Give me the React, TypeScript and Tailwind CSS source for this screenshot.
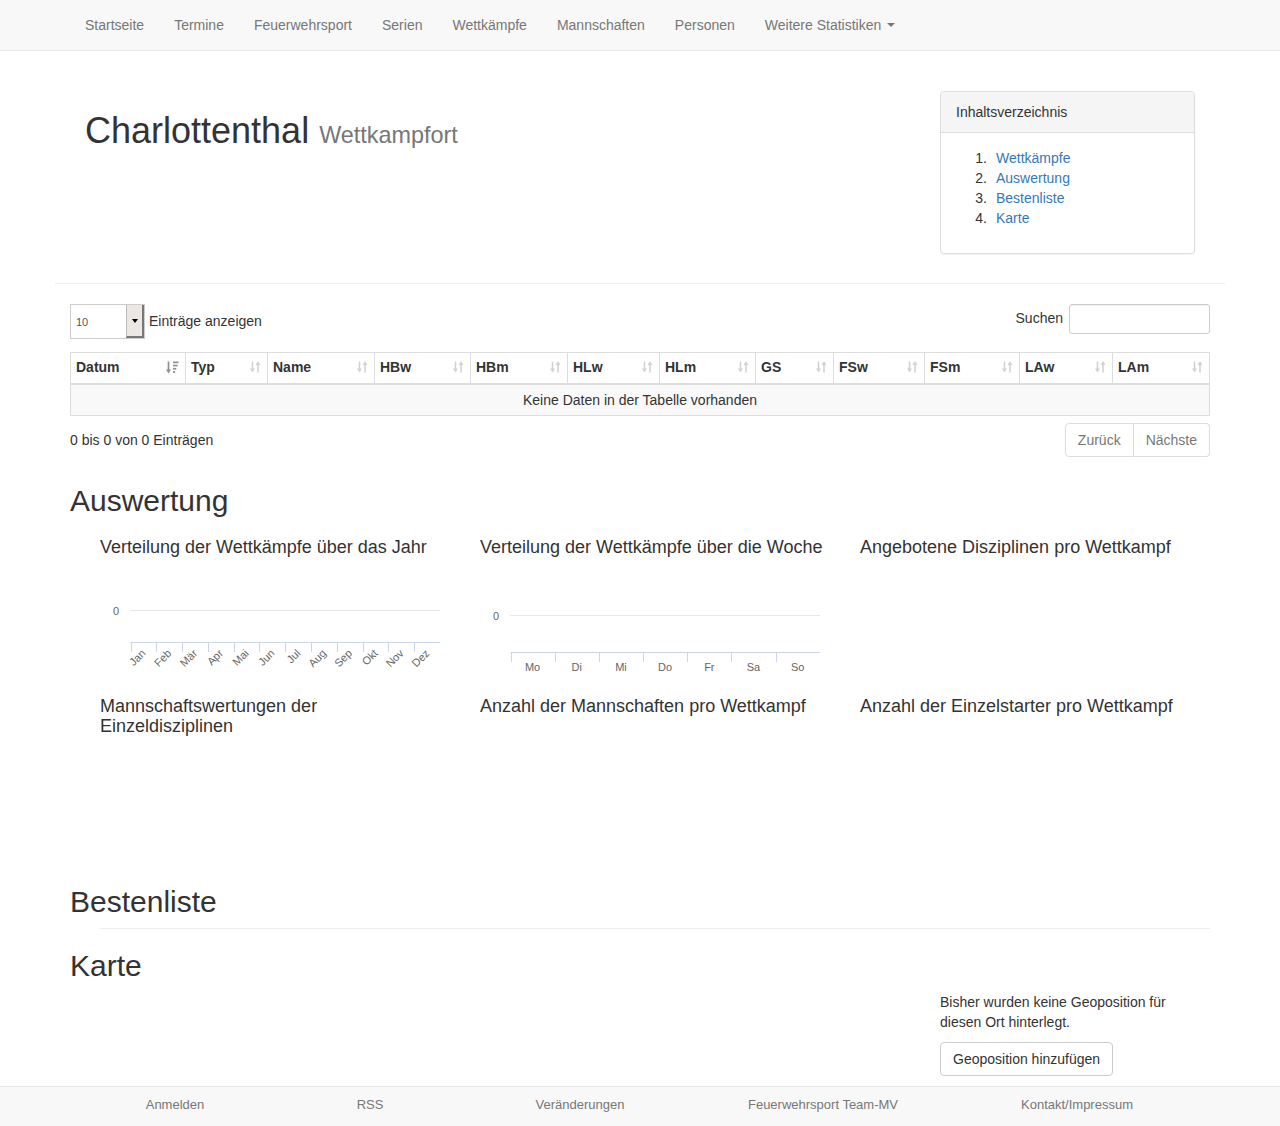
import React from "react";

const navItems = ["Startseite", "Termine", "Feuerwehrsport", "Serien", "Wettkämpfe", "Mannschaften", "Personen"];

const columns = [
  { label: "Datum", w: 115, active: true },
  { label: "Typ", w: 82 },
  { label: "Name", w: 107 },
  { label: "HBw", w: 96 },
  { label: "HBm", w: 97 },
  { label: "HLw", w: 92 },
  { label: "HLm", w: 96 },
  { label: "GS", w: 78 },
  { label: "FSw", w: 91 },
  { label: "FSm", w: 95 },
  { label: "LAw", w: 93 },
  { label: "LAm", w: 97 },
];

const tocLinks = ["Wettkämpfe", "Auswertung", "Bestenliste", "Karte"];
const months = ["Jan", "Feb", "Mär", "Apr", "Mai", "Jun", "Jul", "Aug", "Sep", "Okt", "Nov", "Dez"];
const days = ["Mo", "Di", "Mi", "Do", "Fr", "Sa", "So"];

function SortIcon({ active }: { active?: boolean }) {
  if (active) {
    // sortierte Spalte: Pfeil nach unten + Balken
    return (
      <svg width="13" height="13" viewBox="0 0 13 13" className="shrink-0">
        <line x1="2.5" y1="0.5" x2="2.5" y2="10" stroke="#8f8f8f" strokeWidth="1.7" />
        <polygon points="0,8.5 5,8.5 2.5,12.5" fill="#8f8f8f" />
        <rect x="7" y="0.5" width="5.5" height="1.7" fill="#8f8f8f" />
        <rect x="7" y="3.7" width="4.5" height="1.7" fill="#8f8f8f" />
        <rect x="7" y="6.9" width="3.3" height="1.7" fill="#8f8f8f" />
        <rect x="7" y="10.1" width="2.2" height="1.7" fill="#8f8f8f" />
      </svg>
    );
  }
  return (
    <svg width="11" height="12" viewBox="0 0 11 12" className="shrink-0">
      <line x1="2.5" y1="0.5" x2="2.5" y2="9" stroke="#d2d2d2" strokeWidth="1.6" />
      <polygon points="0,7.5 5,7.5 2.5,11.5" fill="#d2d2d2" />
      <line x1="8" y1="3" x2="8" y2="11.5" stroke="#d2d2d2" strokeWidth="1.6" />
      <polygon points="5.5,4 10.5,4 8,0" fill="#d2d2d2" />
    </svg>
  );
}

function YearChart() {
  const step = 309.5 / 12;
  return (
    <svg width="340" height="138" className="block">
      <text x="19" y="58" textAnchor="end" fontSize="11" fill="#666">0</text>
      <line x1="30" y1="53.5" x2="340" y2="53.5" stroke="#e6e6e6" />
      <line x1="30.5" y1="85.5" x2="340" y2="85.5" stroke="#ccd6eb" />
      {Array.from({ length: 13 }).map((_, i) => {
        const x = Math.round(30.5 + i * step) + 0.5;
        return <line key={i} x1={x} y1="85.5" x2={x} y2="95" stroke="#ccd6eb" />;
      })}
      {months.map((m, i) => {
        const ax = 30.5 + i * step + step / 2 + 3;
        const ay = 97;
        return (
          <text key={m} x={ax} y={ay} textAnchor="end" fontSize="11" fill="#666" transform={`rotate(-45 ${ax} ${ay})`}>
            {m}
          </text>
        );
      })}
    </svg>
  );
}

function WeekChart() {
  const step = 309.3 / 7;
  return (
    <svg width="340" height="138" className="block">
      <text x="19" y="63" textAnchor="end" fontSize="11" fill="#666">0</text>
      <line x1="30" y1="58.5" x2="340" y2="58.5" stroke="#e6e6e6" />
      <line x1="30.5" y1="95.5" x2="340" y2="95.5" stroke="#ccd6eb" />
      {Array.from({ length: 8 }).map((_, i) => {
        const x = Math.round(30.5 + i * step) + 0.5;
        return <line key={i} x1={x} y1="95.5" x2={x} y2="105" stroke="#ccd6eb" />;
      })}
      {days.map((d, i) => (
        <text key={d} x={30.5 + i * step + step / 2} y="114" textAnchor="middle" fontSize="11" fill="#666">
          {d}
        </text>
      ))}
    </svg>
  );
}

function ChartCol({ title, children }: { title: string; children?: React.ReactNode }) {
  return (
    <div className="w-[380px] h-[158px] pl-[30px] flex flex-col">
      <h4 className="w-[350px] text-[18px] leading-[20px] text-[#333]">{title}</h4>
      {children}
    </div>
  );
}

export default function App() {
  return (
    <div className="min-h-[1126px] flex flex-col bg-white font-['Liberation_Sans',Arial,sans-serif] text-[14px] leading-[20px] text-[#333]">
      {/* Navigation */}
      <nav className="h-[51px] bg-[#f8f8f8] border-b border-[#e7e7e7]">
        <ul className="flex pl-[70px]">
          {navItems.map((item) => (
            <li key={item}>
              <a className="block px-[15px] py-[15px] text-[#777]">{item}</a>
            </li>
          ))}
          <li>
            <a className="flex items-center px-[15px] py-[15px] text-[#777]">
              Weitere Statistiken
              <span className="ml-[6px] w-0 h-0 border-t-[4px] border-t-[#777] border-x-[4px] border-x-transparent" />
            </a>
          </li>
        </ul>
      </nav>

      <main className="w-[1170px] mx-auto">
        {/* Kopfbereich */}
        <div className="flex h-[232px]">
          <div className="pl-[30px] pt-[60px]">
            <h1 className="text-[36px] leading-[40px] font-normal">
              Charlottenthal <small className="text-[23.4px] text-[#777]">Wettkampfort</small>
            </h1>
          </div>
          <div className="ml-auto mr-[30px] mt-[40px] w-[255px] h-[163px] border border-[#ddd] rounded-[4px] shadow-[0_1px_1px_rgba(0,0,0,0.05)]">
            <div className="h-[41px] px-[15px] py-[10px] bg-[#f5f5f5] border-b border-[#ddd] rounded-t-[3px]">
              Inhaltsverzeichnis
            </div>
            <ol className="px-[15px] pt-[15px]">
              {tocLinks.map((l, i) => (
                <li key={l} className="flex">
                  <span className="w-[31px] text-right">{i + 1}.</span>
                  <a className="ml-[9px] text-[#337ab7]">{l}</a>
                </li>
              ))}
            </ol>
          </div>
        </div>
        <hr className="border-0 border-t border-[#eee]" />

        <div className="px-[15px]">
          {/* Tabellen-Steuerung */}
          <div className="mt-[20px] h-[34px] flex justify-between items-start">
            <div className="flex items-center">
              <div className="w-[75px] h-[35px] border border-[#ccc] flex items-center bg-white">
                <span className="flex-1 pl-[5px] text-[11px] text-[#555]">10</span>
                <span className="w-[18px] h-[33px] bg-[#ebe8e4] border-l border-[#bbb] border-r-2 border-b-2 border-r-[#777] border-b-[#777] flex items-center justify-center">
                  <span className="w-0 h-0 border-t-[4px] border-t-black border-x-[3.5px] border-x-transparent" />
                </span>
              </div>
              <span className="ml-[4px] -mt-[1px]">Einträge anzeigen</span>
            </div>
            <div className="flex items-center h-[30px]">
              <span className="mr-[6px] -mt-[2px]">Suchen</span>
              <div className="w-[141px] h-[30px] border border-[#ccc] rounded-[3px] shadow-[inset_0_1px_1px_rgba(0,0,0,0.075)]" />
            </div>
          </div>

          {/* Tabelle */}
          <table className="mt-[14px] w-[1140px] border-collapse table-fixed">
            <thead>
              <tr>
                {columns.map((c) => (
                  <th
                    key={c.label}
                    style={{ width: c.w }}
                    className="border border-[#ddd] border-b-2 pl-[5px] pr-[6px] pt-[4px] pb-[6px] text-left font-bold"
                  >
                    <div className="flex items-center justify-between">
                      <span>{c.label}</span>
                      <SortIcon active={c.active} />
                    </div>
                  </th>
                ))}
              </tr>
            </thead>
            <tbody>
              <tr className="bg-[#f9f9f9]">
                <td colSpan={12} className="border border-[#ddd] py-[5px] text-center">
                  Keine Daten in der Tabelle vorhanden
                </td>
              </tr>
            </tbody>
          </table>

          <div className="mt-[7px] flex justify-between items-center">
            <div>0 bis 0 von 0 Einträgen</div>
            <div className="flex">
              <span className="px-[12px] py-[6px] border border-[#ddd] rounded-l-[4px] text-[#777]">Zurück</span>
              <span className="px-[12px] py-[6px] border border-l-0 border-[#ddd] rounded-r-[4px] text-[#777]">Nächste</span>
            </div>
          </div>

          {/* Auswertung */}
          <h2 className="mt-[27px] text-[30px] leading-[33px]">Auswertung</h2>
          <div className="mt-[20px]">
            <div className="flex">
              <ChartCol title="Verteilung der Wettkämpfe über das Jahr">
                <YearChart />
              </ChartCol>
              <ChartCol title="Verteilung der Wettkämpfe über die Woche">
                <WeekChart />
              </ChartCol>
              <ChartCol title="Angebotene Disziplinen pro Wettkampf" />
            </div>
            <div className="flex mt-[1px]">
              <ChartCol title="Mannschaftswertungen der Einzeldisziplinen" />
              <ChartCol title="Anzahl der Mannschaften pro Wettkampf" />
              <ChartCol title="Anzahl der Einzelstarter pro Wettkampf" />
            </div>
          </div>

          {/* Bestenliste */}
          <h2 className="mt-[31px] text-[30px] leading-[33px]">Bestenliste</h2>
          <hr className="mt-[10px] ml-[30px] border-0 border-t border-[#eee]" />

          {/* Karte */}
          <h2 className="mt-[20px] text-[30px] leading-[33px]">Karte</h2>
          <div className="ml-[870px] w-[270px] mt-[10px]">
            <p>Bisher wurden keine Geoposition für diesen Ort hinterlegt.</p>
            <button className="mt-[10px] px-[12px] py-[6px] border border-[#ccc] rounded-[4px] bg-white text-[#333]">
              Geoposition hinzufügen
            </button>
          </div>
        </div>
      </main>

      {/* Footer */}
      <footer className="mt-[10px] h-[41px] bg-[#f8f8f8] border-t border-[#e7e7e7] flex items-start pt-[8px] pl-[75px] text-[13px] text-[#777]">
        <a className="w-[200px] text-center">Anmelden</a>
        <a className="w-[190px] text-center">RSS</a>
        <a className="w-[230px] text-center">Veränderungen</a>
        <a className="w-[256px] text-center">Feuerwehrsport Team-MV</a>
        <a className="w-[252px] text-center">Kontakt/Impressum</a>
      </footer>
    </div>
  );
}
